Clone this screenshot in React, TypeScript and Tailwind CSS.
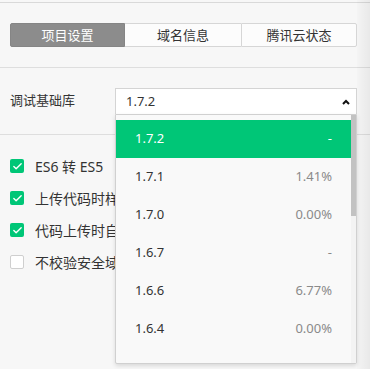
import { Check } from 'lucide-react'

const versions = [
  { v: '1.7.2', pct: '-' },
  { v: '1.7.1', pct: '1.41%' },
  { v: '1.7.0', pct: '0.00%' },
  { v: '1.6.7', pct: '-' },
  { v: '1.6.6', pct: '6.77%' },
  { v: '1.6.4', pct: '0.00%' },
]

const options = [
  { label: 'ES6 转 ES5', checked: true },
  { label: '上传代码时样式自动补全', checked: true },
  { label: '代码上传时自动压缩', checked: true },
  { label: '不校验安全域名、TLS 版本以及 HTTPS 证书', checked: false },
]

export default function App() {
  return (
    <div
      className="relative w-[370px] h-[369px] overflow-hidden bg-[#f7f7f7] text-[#333]"
      style={{ fontFamily: '"Noto Sans", "Noto Sans CJK SC", sans-serif' }}
    >
      <div className="mt-[2px] border-t border-[#d9d9d9]">
        {/* 顶部标签 */}
        <div className="mt-[20px] mx-[10px] w-[347px] h-[24px] flex text-[13px] leading-none">
          <div className="w-[115px] flex items-center justify-center bg-[#8c8c8c] text-white rounded-l-[2px] border border-[#858585]">
            项目设置
          </div>
          <div className="w-[116px] flex items-center justify-center bg-[#fcfcfc] border-y border-[#d6d6d6]">
            域名信息
          </div>
          <div className="flex-1 flex items-center justify-center bg-[#fcfcfc] border border-[#d6d6d6] rounded-r-[2px]">
            腾讯云状态
          </div>
        </div>

        <div className="mt-[20px] border-t border-[#dedede]" />

        {/* 调试基础库 */}
        <div className="h-[66px] flex items-center pl-[10px]">
          <div className="w-[105px] text-[13px]">调试基础库</div>
          <div className="relative w-[242px] h-[26px] bg-white border border-[#d4d4d4] border-b-0 flex items-center pl-[10px] text-[13px]">
            1.7.2
            <svg className="absolute right-[6px] top-[10px]" width="8" height="6" viewBox="0 0 8 6">
              <path d="M1 5 L4 2 L7 5" fill="none" stroke="#111" strokeWidth="2" />
            </svg>

            {/* 下拉菜单 */}
            <div className="absolute left-[-1px] top-[25px] w-[242px] h-[250px] z-10 bg-[#f9f9f9] border border-[#d0d0d0] rounded-b-[2px] shadow-[0_2px_4px_rgba(0,0,0,0.12)] pt-[5px]">
              <div className="mr-[5px]">
                {versions.map((item, i) => (
                  <div
                    key={item.v}
                    className={
                      i === 0
                        ? 'h-[38px] flex items-center justify-between pl-[19px] pr-[19px] bg-[#00c677] text-white text-[13px]'
                        : 'h-[38px] flex items-center justify-between pl-[19px] pr-[19px] text-[13px]'
                    }
                  >
                    <span className={i === 0 ? '' : 'text-[#333]'}>{item.v}</span>
                    <span className={i === 0 ? 'text-white' : 'text-[#8a8a8a]'}>{item.pct}</span>
                  </div>
                ))}
              </div>
              <div className="absolute right-0 top-0 bottom-0 w-[5px] bg-[#f3f3f3]">
                <div className="h-[101px] bg-[#c2c2c2]" />
              </div>
            </div>
          </div>
        </div>

        <div className="border-t border-[#dedede]" />

        {/* 选项 */}
        <div className="pt-[24px] pl-[10px] flex flex-col gap-[18px]">
          {options.map((o) => (
            <div key={o.label} className="h-[14px] flex items-center gap-[11px] text-[14px] whitespace-nowrap">
              {o.checked ? (
                <span className="shrink-0 w-[14px] h-[14px] rounded-[2px] bg-[#00c677] flex items-center justify-center">
                  <Check size={11} strokeWidth={3} color="white" />
                </span>
              ) : (
                <span className="shrink-0 w-[14px] h-[14px] rounded-[2px] bg-white border border-[#cfcfcf]" />
              )}
              <span className="w-[80px] overflow-hidden">{o.label}</span>
            </div>
          ))}
        </div>
      </div>

      {/* 右侧阴影 */}
      <div className="absolute right-0 top-0 bottom-0 w-[13px] bg-gradient-to-r from-[rgba(0,0,0,0.01)] to-[rgba(0,0,0,0.06)]" />
    </div>
  )
}
